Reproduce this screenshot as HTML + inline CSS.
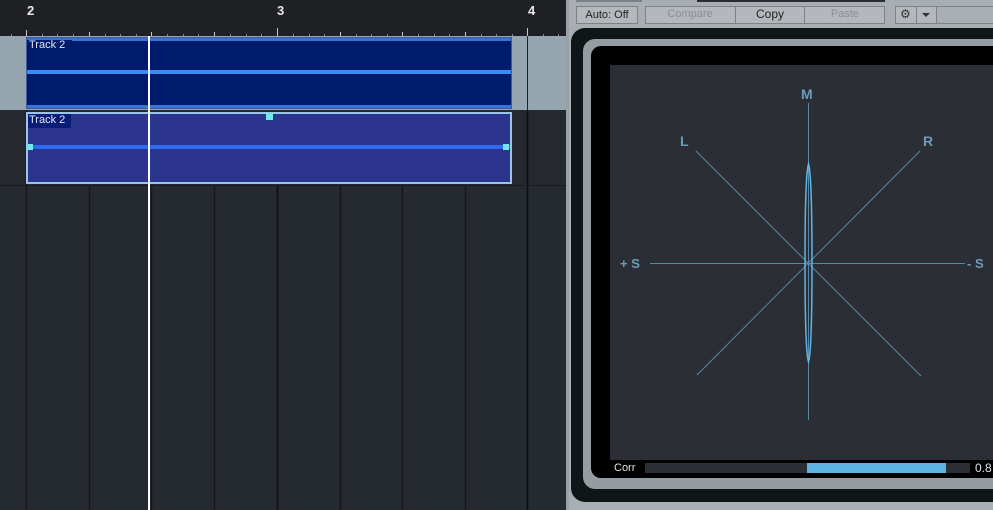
<!DOCTYPE html>
<html><head><meta charset="utf-8"><style>
*{margin:0;padding:0;box-sizing:border-box}
body{width:993px;height:510px;overflow:hidden;background:#252930;position:relative;font-family:"Liberation Sans",sans-serif}
.a{position:absolute}
</style></head><body>
<!-- ruler -->
<div class="a" style="left:0;top:0;width:566px;height:36px;background:#1e2024"></div>
<div class="a" style="left:27px;top:3px;color:#e8e8e8;font-weight:bold;font-size:13px">2</div>
<div class="a" style="left:277px;top:3px;color:#e8e8e8;font-weight:bold;font-size:13px">3</div>
<div class="a" style="left:528px;top:3px;color:#e8e8e8;font-weight:bold;font-size:13px">4</div>
<svg class="a" style="left:0;top:0" width="566" height="36">
<g stroke="#c8c8c8" stroke-width="1">
<line x1="26.5" y1="30" x2="26.5" y2="36"/><line x1="277.5" y1="28" x2="277.5" y2="36"/><line x1="527.5" y1="28" x2="527.5" y2="36"/>
<line x1="89.5" y1="32" x2="89.5" y2="36"/><line x1="151.5" y1="32" x2="151.5" y2="36"/><line x1="214.5" y1="32" x2="214.5" y2="36"/>
<line x1="340.5" y1="32" x2="340.5" y2="36"/><line x1="402.5" y1="32" x2="402.5" y2="36"/><line x1="465.5" y1="32" x2="465.5" y2="36"/>
</g>
<g stroke="#888" stroke-width="1">
<line x1="11.5" y1="34" x2="11.5" y2="36"/><line x1="42.5" y1="34" x2="42.5" y2="36"/><line x1="57.5" y1="34" x2="57.5" y2="36"/><line x1="73.5" y1="34" x2="73.5" y2="36"/>
<line x1="105.5" y1="34" x2="105.5" y2="36"/><line x1="120.5" y1="34" x2="120.5" y2="36"/><line x1="136.5" y1="34" x2="136.5" y2="36"/>
<line x1="167.5" y1="34" x2="167.5" y2="36"/><line x1="183.5" y1="34" x2="183.5" y2="36"/><line x1="198.5" y1="34" x2="198.5" y2="36"/>
<line x1="230.5" y1="34" x2="230.5" y2="36"/><line x1="246.5" y1="34" x2="246.5" y2="36"/><line x1="261.5" y1="34" x2="261.5" y2="36"/>
<line x1="293.5" y1="34" x2="293.5" y2="36"/><line x1="309.5" y1="34" x2="309.5" y2="36"/><line x1="324.5" y1="34" x2="324.5" y2="36"/>
<line x1="356.5" y1="34" x2="356.5" y2="36"/><line x1="371.5" y1="34" x2="371.5" y2="36"/><line x1="387.5" y1="34" x2="387.5" y2="36"/>
<line x1="418.5" y1="34" x2="418.5" y2="36"/><line x1="434.5" y1="34" x2="434.5" y2="36"/><line x1="449.5" y1="34" x2="449.5" y2="36"/>
<line x1="481.5" y1="34" x2="481.5" y2="36"/><line x1="496.5" y1="34" x2="496.5" y2="36"/><line x1="512.5" y1="34" x2="512.5" y2="36"/>
<line x1="543.5" y1="34" x2="543.5" y2="36"/><line x1="558.5" y1="34" x2="558.5" y2="36"/>
</g></svg>
<!-- track 1 row -->
<div class="a" style="left:0;top:36px;width:566px;height:74px;background:#95a6b1"></div>
<div class="a" style="left:0;top:110px;width:566px;height:75px;background:#25292f"></div>
<!-- grid lines -->
<svg class="a" style="left:0;top:110px" width="566" height="400">
<g stroke="#16181b" stroke-width="1.5">
<line x1="26.5" y1="0" x2="26.5" y2="400"/><line x1="89.5" y1="75" x2="89.5" y2="400"/><line x1="151.5" y1="75" x2="151.5" y2="400"/><line x1="214.5" y1="75" x2="214.5" y2="400"/>
<line x1="277.5" y1="75" x2="277.5" y2="400" stroke="#0c0d0f"/><line x1="340.5" y1="75" x2="340.5" y2="400"/><line x1="402.5" y1="75" x2="402.5" y2="400"/><line x1="465.5" y1="75" x2="465.5" y2="400"/><line x1="527.5" y1="0" x2="527.5" y2="400" stroke="#0c0d0f"/>
</g>
<line x1="0" y1="75.5" x2="566" y2="75.5" stroke="#1a1c20"/>
</svg>
<div class="a" style="left:527px;top:36px;width:1px;height:74px;background:#222"></div>
<!-- event 1 -->
<div class="a" style="left:26px;top:37px;width:486px;height:72px;background:#001b6b;border:1px solid #3a5ca0"></div>
<div class="a" style="left:27px;top:38px;width:484px;height:3px;background:#3a73d8"></div>
<div class="a" style="left:27px;top:105px;width:484px;height:3px;background:#3a73d8"></div>
<div class="a" style="left:27px;top:70px;width:484px;height:4px;background:#3b8cf5"></div>
<div class="a" style="left:27px;top:40px;width:45px;height:14px;background:#001b6b"></div>
<div class="a" style="left:29px;top:39px;color:#e0e6f4;font-size:11px">Track 2</div>
<!-- event 2 -->
<div class="a" style="left:26px;top:112px;width:486px;height:72px;background:#2b358e;border:2px solid #9cc4e8"></div>
<div class="a" style="left:28px;top:114px;width:43px;height:14px;background:#0a1c7a"></div>
<div class="a" style="left:29px;top:114px;color:#e0e6f4;font-size:11px">Track 2</div>
<div class="a" style="left:28px;top:145px;width:482px;height:4px;background:#2d6bf0"></div>
<div class="a" style="left:27px;top:144px;width:6px;height:6px;background:#6ee8e8"></div>
<div class="a" style="left:503px;top:144px;width:6px;height:6px;background:#6ee8e8"></div>
<div class="a" style="left:266px;top:113px;width:7px;height:7px;background:#6ee8e8"></div>
<!-- playhead -->
<div class="a" style="left:148px;top:36px;width:2px;height:474px;background:#fff"></div>
<!-- divider -->
<div class="a" style="left:566px;top:0;width:3px;height:510px;background:#9aa0a5"></div>
<!-- right panel -->
<div class="a" style="left:569px;top:0;width:424px;height:510px;background:#a9aeb2"></div>
<div class="a" style="left:576px;top:0;width:66px;height:2px;background:#7a8088"></div>
<div class="a" style="left:697px;top:0;width:188px;height:2px;background:#2a2d30"></div>
<div class="a" style="left:576px;top:6px;width:62px;height:18px;border:1px solid #7d8288;background:#b4b8bc;font-size:11px;color:#222;text-align:center;line-height:16px">Auto: Off</div>
<div class="a" style="left:645px;top:6px;width:240px;height:18px;border:1px solid #7d8288;background:#b4b8bc"></div>
<div class="a" style="left:645px;top:6px;width:90px;height:18px;font-size:11px;color:#8a8f96;text-align:center;line-height:17px">Compare</div>
<div class="a" style="left:735px;top:6px;width:70px;height:18px;border-left:1px solid #7d8288;border-right:1px solid #7d8288;font-size:12px;color:#222;text-align:center;line-height:17px">Copy</div>
<div class="a" style="left:805px;top:6px;width:80px;height:18px;font-size:11px;color:#8a8f96;text-align:center;line-height:17px">Paste</div>
<div class="a" style="left:895px;top:6px;width:42px;height:18px;border:1px solid #7d8288;background:#b4b8bc"></div>
<div class="a" style="left:916px;top:6px;width:1px;height:18px;background:#7d8288"></div>
<div class="a" style="left:900px;top:6px;font-size:12px;color:#333;line-height:17px">⚙</div>
<div class="a" style="left:922px;top:13px;width:0;height:0;border-left:4px solid transparent;border-right:4px solid transparent;border-top:4px solid #333"></div>
<div class="a" style="left:937px;top:6px;width:56px;height:18px;border-top:1px solid #7d8288;border-bottom:1px solid #7d8288"></div>
<!-- frame -->
<div class="a" style="left:571px;top:28px;width:440px;height:474px;background:#0f1618;border-radius:14px"></div>
<div class="a" style="left:583px;top:39px;width:430px;height:450px;background:#959ca2;border-radius:12px"></div>
<div class="a" style="left:591px;top:46px;width:420px;height:432px;background:#000;border-radius:10px"></div>
<div class="a" style="left:610px;top:65px;width:383px;height:395px;background:#2b2e34"></div>
<svg class="a" style="left:610px;top:65px" width="383" height="395">
<g stroke="#5a86a0" stroke-width="1">
<line x1="198.5" y1="38" x2="198.5" y2="355"/>
<line x1="40" y1="198.5" x2="355" y2="198.5"/>
<line x1="86" y1="86" x2="311" y2="311"/>
<line x1="310" y1="86" x2="87" y2="310"/>
</g>
<path d="M198.5 99 C 202 110,202 180,202 198 C 202 220,202 285,198.5 297 C 195 285,195 220,195 198 C 195 180,195 110,198.5 99 Z" fill="none" stroke="#5fb5e8" stroke-width="1.5"/>
<g fill="#6c9cb8" font-family="Liberation Sans" font-weight="bold" font-size="14">
<text x="191" y="34">M</text><text x="70" y="81">L</text><text x="313" y="81">R</text>
<text x="10" y="203" font-size="13">+ S</text><text x="357" y="203" font-size="13">- S</text>
</g>
</svg>
<div class="a" style="left:614px;top:462px;font-size:11px;color:#dfe4e8">Corr</div>
<div class="a" style="left:645px;top:463px;width:325px;height:10px;background:#2b2e34"></div>
<div class="a" style="left:807px;top:463px;width:139px;height:10px;background:#5fb3e3"></div>
<div class="a" style="left:975px;top:461px;font-size:12px;color:#dfe4e8">0.8</div>
</body></html>
